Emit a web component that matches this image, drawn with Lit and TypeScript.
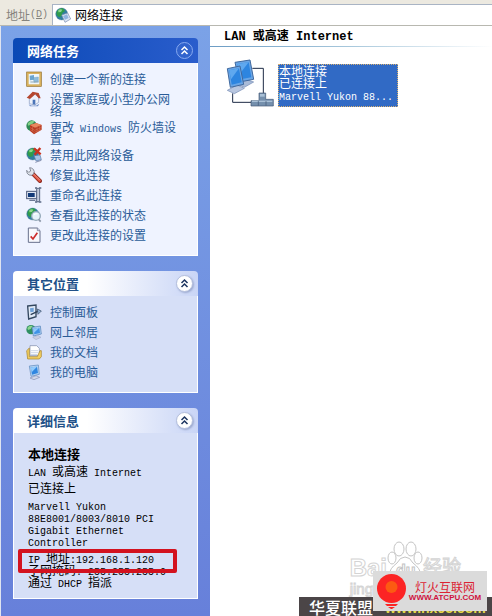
import { LitElement, html, svg, css, SVGTemplateResult } from "lit";
import { customElement, property } from "lit/decorators.js";

/* Latin runs are set in a half-width mono face, ideographs in full width. */
const mix = (text: string) =>
  text
    .split(/([\x20-\x7e]+)/)
    .filter((part) => part.length > 0)
    .map((part) => (/^[\x20-\x7e]/.test(part) ? html`<span class="en">${part}</span>` : part));

const globe = svg`
  <circle cx="20" cy="21" r="18" fill="#2f7f9e" stroke="#4a6a86" stroke-width="1"/>
  <path d="M5 14Q12 3 24 4L30 12L22 18L20 28L12 30Q2 24 5 14Z" fill="#2f9c4a"/>
  <path d="M10 9Q16 5 22 8L18 15L10 16Z" fill="#8fd58c"/>`;

const monitor = svg`
  <path d="M18 10L43 6L46 30L22 36Z" fill="#a9cdf2" stroke="#4f7fb5" stroke-width="2"/>
  <path d="M22 14L40 11L42 27L25 31Z" fill="#3f93e6"/>
  <path d="M22 14L40 11L24 26Z" fill="#8fc9fb"/>
  <path d="M20 40L36 34L45 40L30 47Z" fill="#c9cfe2" stroke="#8490b5" stroke-width="1"/>`;

const icons: Record<string, SVGTemplateResult> = {
  wizard: svg`
    <rect x="2" y="3" width="44" height="43" fill="#d9b15c" stroke="#94702c" stroke-width="2"/>
    <rect x="8" y="9" width="32" height="31" fill="#eef6fb"/>
    <path d="M11 14L24 12V26L12 28Z" fill="#6ba5cf"/>
    <path d="M22 20L37 18V32L24 34Z" fill="#8dbcdc" stroke="#4f88b4" stroke-width="1"/>
    <path d="M13 33H38" stroke="#93a9b5" stroke-width="3"/>`,
  home: svg`
    <path d="M10 20V38L26 42L38 34V18L24 8Z" fill="#eef2fb" stroke="#8898c0" stroke-width="2"/>
    <path d="M2 20L20 2L38 6L44 22L38 22L28 10L12 24Z" fill="#b5472f"/>
    <path d="M20 26H28V41L20 40Z" fill="#4a74b8"/>
    <path d="M8 40Q24 50 40 38L36 46H12Z" fill="#6f8fc7"/>`,
  firewall: svg`
    <circle cx="17" cy="20" r="16" fill="#2f8a55"/>
    <path d="M5 13Q14 2 26 7L18 16L6 20Z" fill="#83cf88"/>
    <path d="M12 18L30 12L47 18V32L24 46L12 36Z" fill="#b83a22"/>
    <path d="M12 18L30 12L47 18L27 26Z" fill="#e88860"/>
    <path d="M13 26L26 34L47 25M13 32L25 40L47 31M20 22V36M33 24V38M41 21V34" stroke="#eda27e" stroke-width="1" fill="none"/>`,
  disable: svg`${globe}
    <path d="M24 26L42 24L46 38L30 42Z" fill="#a6c4e6" stroke="#5577a8" stroke-width="2"/>
    <path d="M24 4L44 22M43 3L26 23" stroke="#c9331f" stroke-width="7"/>
    <path d="M28 46L46 40" stroke="#8791b0" stroke-width="3"/>`,
  repair: svg`
    <path d="M20 20L42 42" stroke="#8f2c22" stroke-width="12" stroke-linecap="round"/>
    <path d="M21 21L41 41" stroke="#e35540" stroke-width="7" stroke-linecap="round"/>
    <path d="M22 20L41 39" stroke="#f6b3a6" stroke-width="2" stroke-linecap="round"/>
    <path d="M11 2L14 12L8 16L2 10Q1 20 9 24Q18 27 23 21Q27 13 22 7Q17 2 11 2Z" fill="#dfe3ea" stroke="#5a6070" stroke-width="2"/>`,
  rename: svg`
    <rect x="2" y="13" width="30" height="22" fill="#dfe6f2" stroke="#4a5878" stroke-width="3"/>
    <rect x="6" y="18" width="20" height="12" fill="#123a78"/>
    <path d="M27 3H33M39 3H46M27 45H34M38 45H46" stroke="#5b6985" stroke-width="4"/>
    <path d="M32 4H41V44H32Z" fill="#c3cbdc" stroke="#5b6985" stroke-width="3"/>
    <path d="M10 40H28" stroke="#6c7894" stroke-width="4"/>`,
  status: svg`${globe}
    <circle cx="30" cy="27" r="13" fill="#e6f3fa" stroke="#93a8b8" stroke-width="4"/>
    <path d="M24 24Q28 18 35 21" stroke="#ffffff" stroke-width="4" fill="none"/>
    <path d="M38 37L44 44" stroke="#8b97a8" stroke-width="5"/>`,
  settings: svg`
    <path d="M7 3H34L42 11V46H7Z" fill="#f7f8fd" stroke="#68708c" stroke-width="3"/>
    <path d="M34 3V11H42" fill="#c9d0e4" stroke="#68708c" stroke-width="2"/>
    <path d="M14 28L21 36L34 17" stroke="#cc2c2c" stroke-width="5" fill="none"/>`,
  control: svg`
    <path d="M5 6L30 3V38L8 45Z" fill="#dfe9f7" stroke="#33475f" stroke-width="4"/>
    <path d="M12 13L23 11V23L13 25Z" fill="#6fa1d8"/>
    <path d="M14 32L40 20" stroke="#2c3f57" stroke-width="4"/>
    <path d="M34 15L46 21L36 31Z" fill="#8fb0d8" stroke="#33475f" stroke-width="2"/>`,
  places: svg`
    <circle cx="15" cy="17" r="14" fill="#2f8f62"/>
    <path d="M4 12Q10 3 20 6L14 15L6 18Z" fill="#8ad58f"/>
    <g>${monitor}</g>`,
  documents: svg`
    <path d="M12 5H32L40 13V34H12Z" fill="#ffffff" stroke="#7c8aa8" stroke-width="2"/>
    <path d="M2 20L10 12V38H34L42 20H46V38L40 45H5Z" fill="#f2cf63" stroke="#a57f22" stroke-width="2"/>
    <path d="M15 20H36M15 26H36M15 32H33" stroke="#b4c4dd" stroke-width="2"/>`,
  computer: svg`
    <path d="M10 6L37 3L40 31L15 37Z" fill="#b5d3f3" stroke="#5a86ba" stroke-width="2"/>
    <path d="M14 10L33 8L36 27L18 32Z" fill="#2f86e0"/>
    <path d="M14 10L33 8L17 25Z" fill="#93cbfb"/>
    <path d="M12 42L30 35L41 40L24 47Z" fill="#d3d8e8" stroke="#8490b5" stroke-width="2"/>`,
  network: svg`${globe}
    <path d="M20 24L38 18L47 36L30 46Z" fill="#dce6f4" stroke="#7488ad" stroke-width="2"/>
    <path d="M24 27L36 22L41 33L30 38Z" fill="#8fb4df"/>`,
};

const icon = (name: string) =>
  html`<svg class="icon" viewBox="0 0 48 48" aria-hidden="true">${icons[name]}</svg>`;

const shared = css`
  * {
    box-sizing: border-box;
  }
  .en {
    font-family: "Liberation Mono", monospace;
    font-size: 10px;
    line-height: 0;
    white-space: pre-wrap;
  }
  .icon {
    display: block;
    flex: none;
    width: 16px;
    height: 16px;
  }
`;

@customElement("task-panel")
class TaskPanel extends LitElement {
  @property() heading = "";
  @property({ type: Boolean, reflect: true }) primary = false;

  static styles = [
    shared,
    css`
      :host {
        display: block;
      }
      .head {
        display: flex;
        align-items: center;
        justify-content: space-between;
        height: 25px;
        padding: 0 5px 0 14px;
        border-radius: 4px 4px 0 0;
        background: linear-gradient(90deg, #ffffff 40%, #c9d5f6);
        color: #215188;
      }
      :host([primary]) .head {
        background: linear-gradient(90deg, #0a49b6, #2a5dcc);
        color: #ffffff;
      }
      h2 {
        margin: 0;
        font-size: 13px;
        line-height: 16px;
        font-weight: 700;
      }
      .toggle {
        display: block;
        width: 17px;
        height: 17px;
        padding: 0;
        border: 1px solid #b4bfdc;
        border-radius: 50%;
        background: #ffffff;
        color: #1c3560;
        box-shadow: 1px 1px 2px #9aa8cf;
      }
      :host([primary]) .toggle {
        border-color: #88aaf0;
        background: #3163cd;
        color: #ffffff;
        box-shadow: none;
      }
      .toggle svg {
        display: block;
        width: 15px;
        height: 15px;
      }
      .body {
        border: 1px solid #ffffff;
        border-top: 0;
        background: #d6dff7;
      }
      :host([primary]) .body {
        background: #eff3ff;
      }
    `,
  ];

  render() {
    return html`
      <div class="head">
        <h2>${this.heading}</h2>
        <button class="toggle" aria-label=${this.heading}>
          <svg viewBox="0 0 15 15" fill="none" stroke="currentColor" stroke-width="1.5">
            <path d="M4.500 7L7.500 4L10.500 7M4.500 11L7.500 8L10.500 11" />
          </svg>
        </button>
      </div>
      <div class="body"><slot></slot></div>
    `;
  }
}

@customElement("app-root")
class AppRoot extends LitElement {
  static styles = [
    shared,
    css`
      :host {
        position: relative;
        display: flex;
        flex-direction: column;
        min-height: 100vh;
        background: #ffffff;
        color: #000000;
        font: 12px/12px "Noto Sans CJK SC", sans-serif;
      }
      .address {
        display: flex;
        align-items: stretch;
        height: 26px;
        padding-top: 4px;
        background: #ece9e0;
        border-bottom: 1px solid #b8b8b0;
      }
      .address label {
        display: flex;
        align-items: center;
        width: 52px;
        padding-left: 6px;
        color: #85837c;
      }
      .field {
        display: flex;
        flex: 1;
        align-items: center;
        gap: 4px;
        padding-left: 2px;
        border: 1px solid #a9b4c4;
        border-right: 0;
        border-bottom: 0;
        background: #ffffff;
      }
      .field input {
        flex: 1;
        min-width: 0;
        padding: 0;
        border: 0;
        outline: 0;
        background: transparent;
        color: #000000;
        font: 12px/16px "Noto Sans CJK SC", sans-serif;
      }
      .main {
        display: flex;
        flex: 1;
      }
      .side {
        display: flex;
        flex: none;
        flex-direction: column;
        gap: 15px;
        width: 210px;
        padding: 12px 12px 16px;
        border-left: 1px solid #dfe4f0;
        background: linear-gradient(#7ba2e7, #6780da);
      }
      ul {
        margin: 0;
        padding: 8px 18px 8px 12px;
        list-style: none;
      }
      li {
        min-height: 20px;
      }
      .task {
        display: flex;
        gap: 8px;
        color: #2a5c98;
        text-decoration: none;
      }
      .task .label {
        flex: 1;
        padding: 2px 0;
      }
      .details {
        display: flex;
        flex-direction: column;
        gap: 5px;
        padding: 15px 14px 10px;
      }
      .details p {
        margin: 0;
      }
      .details .name {
        font-size: 13px;
        font-weight: 700;
      }
      .adapter {
        max-width: 130px;
      }
      .addresses {
        position: relative;
      }
      .mark {
        position: absolute;
        top: -3px;
        left: -10px;
        width: 159px;
        height: 24px;
        border: 4px solid #d3121f;
        border-radius: 2px;
      }
      .content {
        flex: 1;
        min-width: 0;
      }
      .group {
        margin: 0;
        padding: 3px 0 5px 14px;
        border-bottom: 1px solid;
        border-image: linear-gradient(90deg, #6c9cc4, #a8c8dc 50%, #ffffff) 1;
        font-size: 12px;
        line-height: 12px;
        font-weight: 700;
      }
      .group .en {
        font-size: 12px;
      }
      .connection {
        display: flex;
        gap: 4px;
        margin: 12px 0 0 16px;
        padding: 0;
        border: 0;
        background: transparent;
        font: inherit;
        text-align: left;
      }
      .connection svg {
        flex: none;
        width: 48px;
        height: 48px;
      }
      .caption {
        display: flex;
        flex-direction: column;
        width: 120px;
        margin-top: 5px;
        border: 1px dotted #d8b070;
        background: #316ac5;
        color: #ffffff;
      }
      .baidu {
        position: absolute;
        right: 31px;
        bottom: 18px;
        display: grid;
        grid-template-columns: auto 36px auto;
        align-items: end;
        color: #ffffff;
        font: 700 24px/24px "Liberation Sans", "Noto Sans CJK SC", sans-serif;
        -webkit-text-stroke: 1px #d4d4d4;
      }
      .baidu svg {
        width: 36px;
        height: 39px;
      }
      .baidu .cn {
        font-size: 19px;
        font-weight: 400;
      }
      .baidu .sub {
        grid-column: 1 / 4;
        font-size: 15px;
        line-height: 18px;
        font-weight: 400;
      }
      .banner {
        position: absolute;
        right: 0;
        bottom: 0;
        display: flex;
        align-items: center;
        gap: 12px;
        width: 193px;
        height: 19px;
        padding-left: 10px;
        background: #4b4547;
        color: #ffffff;
        font: 500 16px/16px "Noto Sans CJK SC", sans-serif;
      }
      .banner .site {
        padding-top: 3px;
        color: #e2d84a;
        font: 700 14px/14px "Liberation Sans", sans-serif;
      }
      .badge {
        position: absolute;
        right: 5px;
        bottom: 5px;
        display: flex;
        align-items: center;
        gap: 1px;
        width: 114px;
        height: 40px;
        padding: 0 4px;
        background: #dbdbdb;
        color: #dc2333;
      }
      .badge svg {
        flex: none;
        width: 29px;
        height: 36px;
      }
      .badge div {
        display: flex;
        flex: 1;
        flex-direction: column;
        align-items: center;
        font: 12px/12px "Noto Sans CJK SC", sans-serif;
      }
      .badge b {
        color: #cf1240;
        font: 700 8px/9px "Liberation Sans", sans-serif;
      }
    `,
  ];

  private tasks = [
    ["wizard", "创建一个新的连接"],
    ["home", "设置家庭或小型办公网络"],
    ["firewall", "更改 Windows 防火墙设置"],
    ["disable", "禁用此网络设备"],
    ["repair", "修复此连接"],
    ["rename", "重命名此连接"],
    ["status", "查看此连接的状态"],
    ["settings", "更改此连接的设置"],
  ];

  private places = [
    ["control", "控制面板"],
    ["places", "网上邻居"],
    ["documents", "我的文档"],
    ["computer", "我的电脑"],
  ];

  private list(items: string[][]) {
    return html`<ul>
      ${items.map(
        ([name, label]) =>
          html`<li><a class="task" href="#">${icon(name)}<span class="label">${mix(label)}</span></a></li>`
      )}
    </ul>`;
  }

  render() {
    return html`
      <div class="address">
        <label for="address">地址<span class="en">(<u>D</u>)</span></label>
        <div class="field">${icon("network")}<input id="address" type="text" value="网络连接" /></div>
      </div>
      <div class="main">
        <aside class="side">
          <task-panel primary heading="网络任务">${this.list(this.tasks)}</task-panel>
          <task-panel heading="其它位置">${this.list(this.places)}</task-panel>
          <task-panel heading="详细信息">
            <div class="details">
              <p class="name">本地连接</p>
              <p>${mix("LAN 或高速 Internet")}</p>
              <p>已连接上</p>
              <p class="adapter">${mix("Marvell Yukon 88E8001/8003/8010 PCI Gigabit Ethernet Controller")}</p>
              <p class="addresses">
                ${mix("IP 地址:192.168.1.120")}<br />${mix("子网掩码: 255.255.255.0")}<br />${mix("通过 DHCP 指派")}
                <span class="mark"></span>
              </p>
            </div>
          </task-panel>
        </aside>
        <main class="content">
          <h1 class="group">${mix("LAN 或高速 Internet")}</h1>
          <button class="connection">
            <svg viewBox="63 117 144 144" aria-hidden="true">
              <path d="M142 145H175V222M83 220V247H140" fill="none" stroke="#1d2b45" stroke-width="3" />
              <path d="M92 190L122 178L146 186L118 202Z" fill="#a9bbd8" stroke="#7289b3" stroke-width="2" />
              <path d="M90 127L135 120L146 178L103 186Z" fill="#6aa6e6" stroke="#40699f" stroke-width="3" />
              <path d="M97 132L131 127L139 172L107 178Z" fill="#2d85e0" />
              <path d="M97 132L131 127L104 162Z" fill="#5fa8ef" />
              <path d="M67 211L96 195L118 205L88 221Z" fill="#b9c7e0" stroke="#7289b3" stroke-width="2" />
              <path d="M67 146L105 138L116 193L76 202Z" fill="#6aa6e6" stroke="#40699f" stroke-width="3" />
              <path d="M73 151L102 145L110 187L80 194Z" fill="#2d85e0" />
              <path d="M73 151L102 145L78 178Z" fill="#5fa8ef" />
              <path d="M162 219H182V238H205V258H138V242H162Z" fill="#7590ad" stroke="#3f5674" stroke-width="2" />
              <path d="M165 222H179V230H165Z" fill="#a9c0d6" />
              <path d="M141 244H202" stroke="#a9c0d6" stroke-width="4" />
              <path d="M160 243V257M183 243V257" stroke="#3f5674" stroke-width="2" />
            </svg>
            <span class="caption">
              <span>本地连接</span>
              <span>已连接上</span>
              <span>${mix("Marvell Yukon 88...")}</span>
            </span>
          </button>
        </main>
      </div>
      <div class="baidu">
        <span>Bai</span>
        <svg viewBox="0 0 36 39" fill="#ffffff" stroke="#c4c4c4" stroke-width="1">
          <ellipse cx="5" cy="17" rx="4" ry="6" />
          <ellipse cx="12" cy="8" rx="5" ry="7" />
          <ellipse cx="24" cy="8" rx="5" ry="7" />
          <ellipse cx="31" cy="17" rx="4" ry="6" />
          <path d="M18 16Q23 16 26 22Q34 28 33 33Q30 39 18 37Q6 39 3 33Q2 28 10 22Q13 16 18 16Z" />
          <text x="9" y="35" font-size="16">du</text>
        </svg>
        <span class="cn">经验</span>
        <span class="sub">jingyan</span>
      </div>
      <div class="banner"><span>华夏联盟</span><span class="site">www.hx95.com</span></div>
      <div class="badge">
        <svg viewBox="0 0 29 36" aria-hidden="true">
          <circle cx="14.500" cy="15.500" r="14.500" fill="#fc2424" />
          <circle cx="14.500" cy="14" r="6" fill="#fc5a12" />
          <path d="M8 31H21L19 33H10Z" fill="#fc2424" />
          <path d="M11 34H18L15 36H14Z" fill="#fc2424" />
        </svg>
        <div><span>灯火互联网</span><b>WWW.ATCPU.COM</b></div>
      </div>
    `;
  }
}
